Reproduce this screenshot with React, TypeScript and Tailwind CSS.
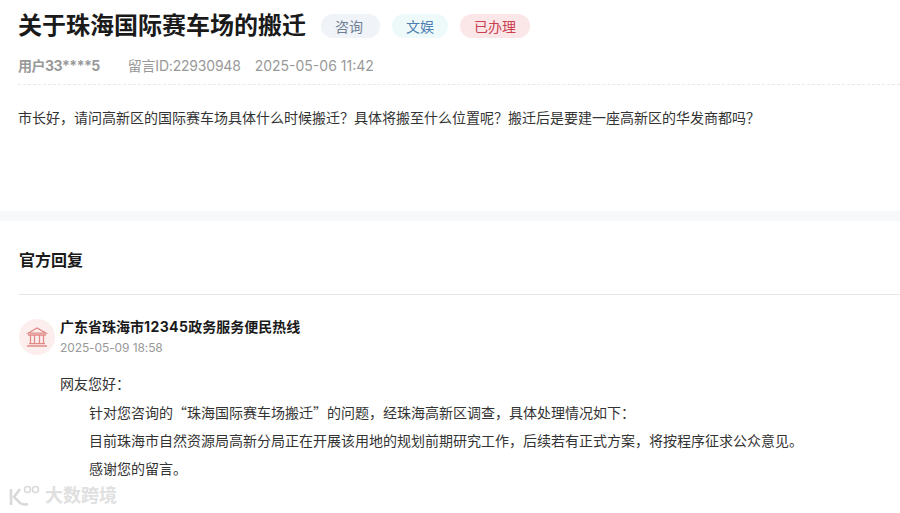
const font = "font-['Inter','Noto_Sans_CJK_SC',sans-serif]";
const cjk = "font-['Noto_Sans_CJK_SC',sans-serif]";

function Tag({ label, className }: { label: string; className: string }) {
  return <span className={`flex h-6 items-center rounded-full text-[14px] ${className}`}>{label}</span>;
}

function BankIcon() {
  return (
    <svg width="22" height="20" viewBox="0 0 22 20" fill="none" stroke="#e08a86" strokeWidth="1.3">
      <path d="M2 6.2 11 1l9 5.2z" />
      <path d="M2 8h18M4.5 8.5v8M8.5 8.5v8M13.5 8.5v8M17.5 8.5v8M3 16.6h16M1 19h20" />
    </svg>
  );
}

function Watermark() {
  return (
    <div className="absolute bottom-[7px] left-[8px] flex items-center gap-[5px]">
      <svg width="32" height="21" viewBox="0 0 32 21" fill="none" stroke="#d9d9d9" strokeWidth="2.6">
        <path d="M3 4v16M12 4 6 12l6 6c3 2 5 2 8 1" />
        <circle cx="19.5" cy="4.5" r="3" strokeWidth="1.5" />
        <circle cx="27.5" cy="4.5" r="3" strokeWidth="1.5" />
      </svg>
      <span className="text-[18px] font-bold leading-none text-[#e0e0e0]">大数跨境</span>
    </div>
  );
}

export default function App() {
  return (
    <div className={`relative h-[513px] w-[900px] overflow-hidden bg-white ${font}`}>
      <div className="pl-[18px] pt-[10px]">
        <div className="flex h-8 items-center">
          <h1 className="text-[24px] font-bold text-[#1a1a1a]">关于珠海国际赛车场的搬迁</h1>
          <div className="ml-[15px] flex gap-3">
            <Tag label="咨询" className="bg-[#f0f3f8] pl-[14px] pr-[17px] text-[#6f7f93]" />
            <Tag label="文娱" className="bg-[#eefafa] px-3.5 text-[#4c7fb0]" />
            <Tag label="已办理" className="bg-[#fbe6e8] px-3.5 text-[#c9404f]" />
          </div>
        </div>
        <div className="mt-[14px] flex h-[18px] items-center text-[14px] text-[#999]">
          <span className="font-bold tracking-[-0.5px]">用户33****5</span>
          <span className="ml-7 tracking-[-0.2px]">留言ID:22930948</span>
          <span className="ml-3.5">2025-05-06 11:42</span>
        </div>
        <div className="mt-[10px] border-t border-dashed border-[#e8e8e8]" />
        <p className="mt-[23px] text-[14px] leading-5 text-[#333]">
          市长好，请问高新区的国际赛车场具体什么时候搬迁？具体将搬至什么位置呢？搬迁后是要建一座高新区的华发商都吗？
        </p>
      </div>
      <div className="mt-[83px] h-[10px] bg-[#f7f8fa]" />
      <div className="pl-[19px]">
        <h2 className="flex h-[74px] items-center border-b border-[#e8e8e8] pt-1 text-[16px] font-bold text-[#1a1a1a]">官方回复</h2>
        <div className="mt-[22px] flex gap-[5px]">
          <div className="mt-[2px] flex h-9 w-9 items-center justify-center rounded-full bg-[#fdeeee]">
            <BankIcon />
          </div>
          <div>
            <div className="text-[14px] font-bold leading-5 text-[#1a1a1a]">
              广东省珠海市<span className="tracking-[0.4px]">12345</span>政务服务便民热线
            </div>
            <div className="mt-px text-[12px] leading-5 tracking-[-0.1px] text-[#999]">2025-05-09 18:58</div>
            <div className="mt-[12px] text-[14px] leading-7 text-[#333]">
              <p>网友您好：</p>
              <div className="pl-[29px]">
                <p>
                  针对您咨询的<span className={cjk}>“</span>珠海国际赛车场搬迁<span className={cjk}>”</span>的问题，经珠海高新区调查，具体处理情况如下：
                </p>
                <p>目前珠海市自然资源局高新分局正在开展该用地的规划前期研究工作，后续若有正式方案，将按程序征求公众意见。</p>
                <p>感谢您的留言。</p>
              </div>
            </div>
          </div>
        </div>
      </div>
      <Watermark />
    </div>
  );
}
